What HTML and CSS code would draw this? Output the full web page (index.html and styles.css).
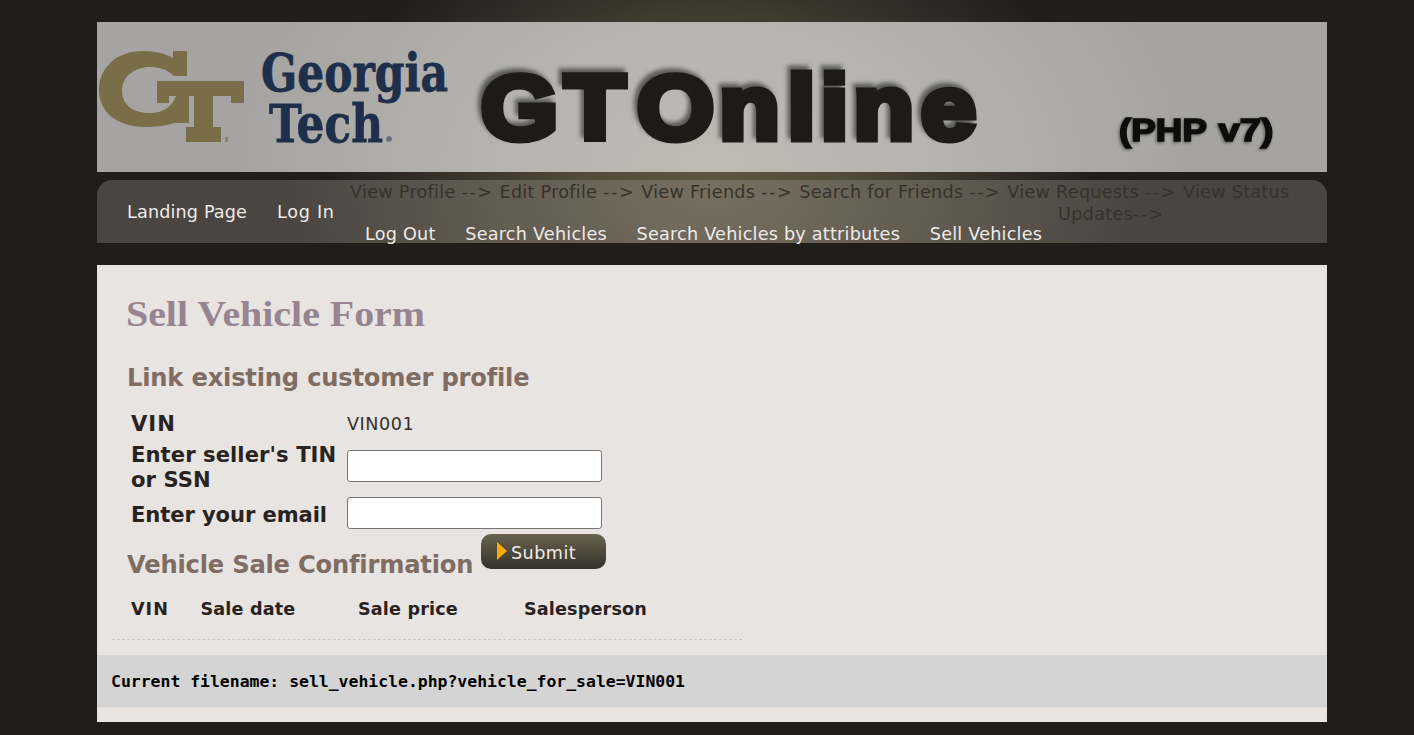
FILE: index.html
```html
<!DOCTYPE html>
<html lang="en">
<head>
<meta charset="utf-8">
<title>Sell Vehicle Form</title>
<link rel="stylesheet" href="styles.css">
</head>
<body>
<div class="main">
  <header class="banner">
    <svg class="banner-art" viewBox="0 0 1230 150" width="1230" height="150">
      <g fill="#7a6e48">
        <path fill-rule="evenodd" d="M76 36V29H90V54H77C70 47 61 45 53 45C38 45 25 54 25 69C25 84 38 91 53 91C66 91 75 85 79 74H72V81H60V59H147V81H134V74H116V105H124V120H89V105H97V74H92V101H77C69 104 58 105 48 105C20 105 2 90 2 68C2 47 18 29 46 29C60 29 69 32 76 36Z"/>
        <rect x="128" y="115" width="3" height="5" opacity=".6"/>
      </g>
      <g class="wordmark">
        <text x="164" y="69" font-size="53" textLength="187" lengthAdjust="spacingAndGlyphs">Georgia</text>
        <text x="172" y="120" font-size="53" textLength="114" lengthAdjust="spacingAndGlyphs">Tech</text>
        <circle cx="292" cy="117" r="2.5" opacity=".5"/>
      </g>
      <g class="title">
        <text class="title-main" transform="scale(1.1 1)" x="349 425.2 490.8 565.8 628 658 687.7 749" y="117">GTOnline</text>
        <text class="title-sub" x="1022" y="119" textLength="88" lengthAdjust="spacingAndGlyphs">(PHP</text>
        <text class="title-sub" x="1121.5" y="119" textLength="55" lengthAdjust="spacingAndGlyphs">v7)</text>
      </g>
    </svg>
  </header>
  <nav class="nav">
    <a class="first">Landing Page</a>
    <a class="first short">Log In</a>
    <div class="nav-rest">
      <p class="flow">View Profile <i>--&gt;</i> Edit Profile <i>--&gt;</i> View Friends <i>--&gt;</i> Search for Friends <i>--&gt;</i> View Requests <i>--&gt;</i> View Status</p>
      <p class="flow last">Updates<i>--&gt;</i></p>
      <div class="links"><a>Log Out</a><a>Search Vehicles</a><a>Search Vehicles by attributes</a><a>Sell Vehicles</a></div>
    </div>
  </nav>
  <main class="content">
    <h1><svg width="320" height="43"><text x="0" y="34" textLength="299" lengthAdjust="spacingAndGlyphs">Sell Vehicle Form</text></svg></h1>
    <h2>Link existing customer profile</h2>
    <form class="form">
      <label class="vin">VIN</label><span class="value">VIN001</span>
      <label>Enter seller's TIN<br>or SSN</label><input type="text">
      <label class="email">Enter your email</label><input type="text">
    </form>
    <div class="confirm">
      <h2>Vehicle Sale Confirmation</h2>
      <button class="submit"><svg width="10" height="18" viewBox="0 0 10 18"><path d="M0 0L10 9L0 18Z" fill="#ffab00"/></svg><span>Submit</span></button>
    </div>
    <div class="sales"><b class="wide">VIN</b><b>Sale date</b><b>Sale price</b><b>Salesperson</b></div>
    <div class="file">Current filename: sell_vehicle.php?vehicle_for_sale=VIN001</div>
  </main>
</div>
</body>
</html>
```
FILE: styles.css
```css
* { box-sizing: border-box; }
body {
  margin: 0;
  height: 735px;
  overflow: hidden;
  font-family: Verdana, "DejaVu Sans", sans-serif;
  font-size: 17.6px;
  color: #362f29;
  background: #211d1a radial-gradient(ellipse 390px 290px at 712px 175px, #5c5542 0%, #504a39 35%, #353028 70%, #211d1a 100%) 0 0 / 100% 243px no-repeat;
}
.main { width: 1230px; margin-left: 97px; padding-top: 22px; }
.banner {
  height: 150px;
  margin-bottom: 8px;
  background: radial-gradient(ellipse 480px 330px at 615px 150px, #bebbb2 0%, #b5b4ae 45%, #a5a4a2 100%);
}
.banner-art { display: block; }
.wordmark { font-family: "DejaVu Serif", serif; font-weight: bold; fill: #1d2f4a; stroke: #1d2f4a; stroke-width: .8px; }
.title { font-family: "Liberation Sans", sans-serif; font-weight: bold; }
.title-main { font-size: 90px; fill: #1c1b15; stroke: #1c1b15; stroke-width: 7px; filter: drop-shadow(-3px -4px 2px rgba(30, 30, 25, .6)); }
.title-sub { font-size: 32px; fill: #0d0d0b; stroke: #0d0d0b; stroke-width: 1.6px; filter: drop-shadow(-1px 1px 1.5px rgba(30, 30, 25, .6)); }
.nav {
  display: flex;
  height: 63px;
  border-radius: 15px 15px 0 0;
  background: radial-gradient(ellipse 430px 260px at 615px 10px, #777061 0%, #625c51 50%, #4a4541 100%);
  line-height: 22px;
}
.nav a { color: #eeebe8; white-space: nowrap; letter-spacing: .23px; }
.nav .first { padding: 21px 0 0 30px; }
.nav .first:first-child { letter-spacing: .15px; }
.nav .short { width: 88px; letter-spacing: .7px; }
.nav-rest { flex: 1; margin-left: 15px; }
.flow { margin: 0; height: 22px; padding-top: 1px; color: #37312b; white-space: nowrap; letter-spacing: .28px; }
.flow i { font-style: normal; letter-spacing: 1.6px; }
.flow.last { margin-left: 708px; height: 21px; }
.links { display: flex; gap: 29.7px; padding-left: 15px; }
.content { height: 457px; margin-top: 22px; padding-top: 27px; background: #e8e4e1; }
h1 { margin: 0 0 0 29px; height: 43px; }
h1 svg { display: block; font: bold 36.5px "Liberation Serif", serif; fill: #968590; }
h2 { margin: 29px 0 0 30px; font-size: 24.2px; line-height: 28px; letter-spacing: -.2px; color: #7f6d64; white-space: nowrap; }
.form {
  display: grid;
  grid-template-columns: 216px 255px;
  grid-template-rows: 31px 53px 41px;
  align-items: center;
  margin: 16px 0 0 34px;
}
.form label { font-size: 21.1px; line-height: 25px; font-weight: bold; color: #29231f; white-space: nowrap; padding-top: 2px; letter-spacing: .08px; }
.form .vin { padding-top: 0; letter-spacing: 1px; }
.form .email { padding-top: 3px; letter-spacing: -.1px; }
.form .value { letter-spacing: .55px; }
.form input { width: 255px; height: 32px; border: 1px solid #767676; border-radius: 3px; background: #fff; }
.confirm { display: flex; height: 48px; margin-top: 1px; }
.confirm h2 { margin-top: 17px; width: 354px; }
.submit {
  display: flex;
  align-items: center;
  gap: 4px;
  width: 125px;
  height: 35px;
  padding: 2px 16px 0;
  border: 0;
  border-radius: 10px;
  font: 17.6px Verdana, "DejaVu Sans", sans-serif;
  letter-spacing: .45px;
  color: #eeebe8;
  background: linear-gradient(#696350, #37302a);
}
.submit svg { margin-top: -3px; }
.sales {
  display: grid;
  grid-template-columns: 69.5px 157.5px 166px 1fr;
  width: 630px;
  height: 58px;
  margin-left: 15px;
  padding: 16px 0 0 19px;
  line-height: 22px;
  letter-spacing: .15px;
  color: #29231f;
  border-bottom: 1px dashed #c8c8c8;
}
.sales .wide { letter-spacing: 1px; }
.file {
  height: 52px;
  margin-top: 15px;
  padding-left: 14px;
  font: bold 16.45px/53px "DejaVu Sans Mono", monospace;
  color: #000;
  background: #d4d4d4;
}
```
